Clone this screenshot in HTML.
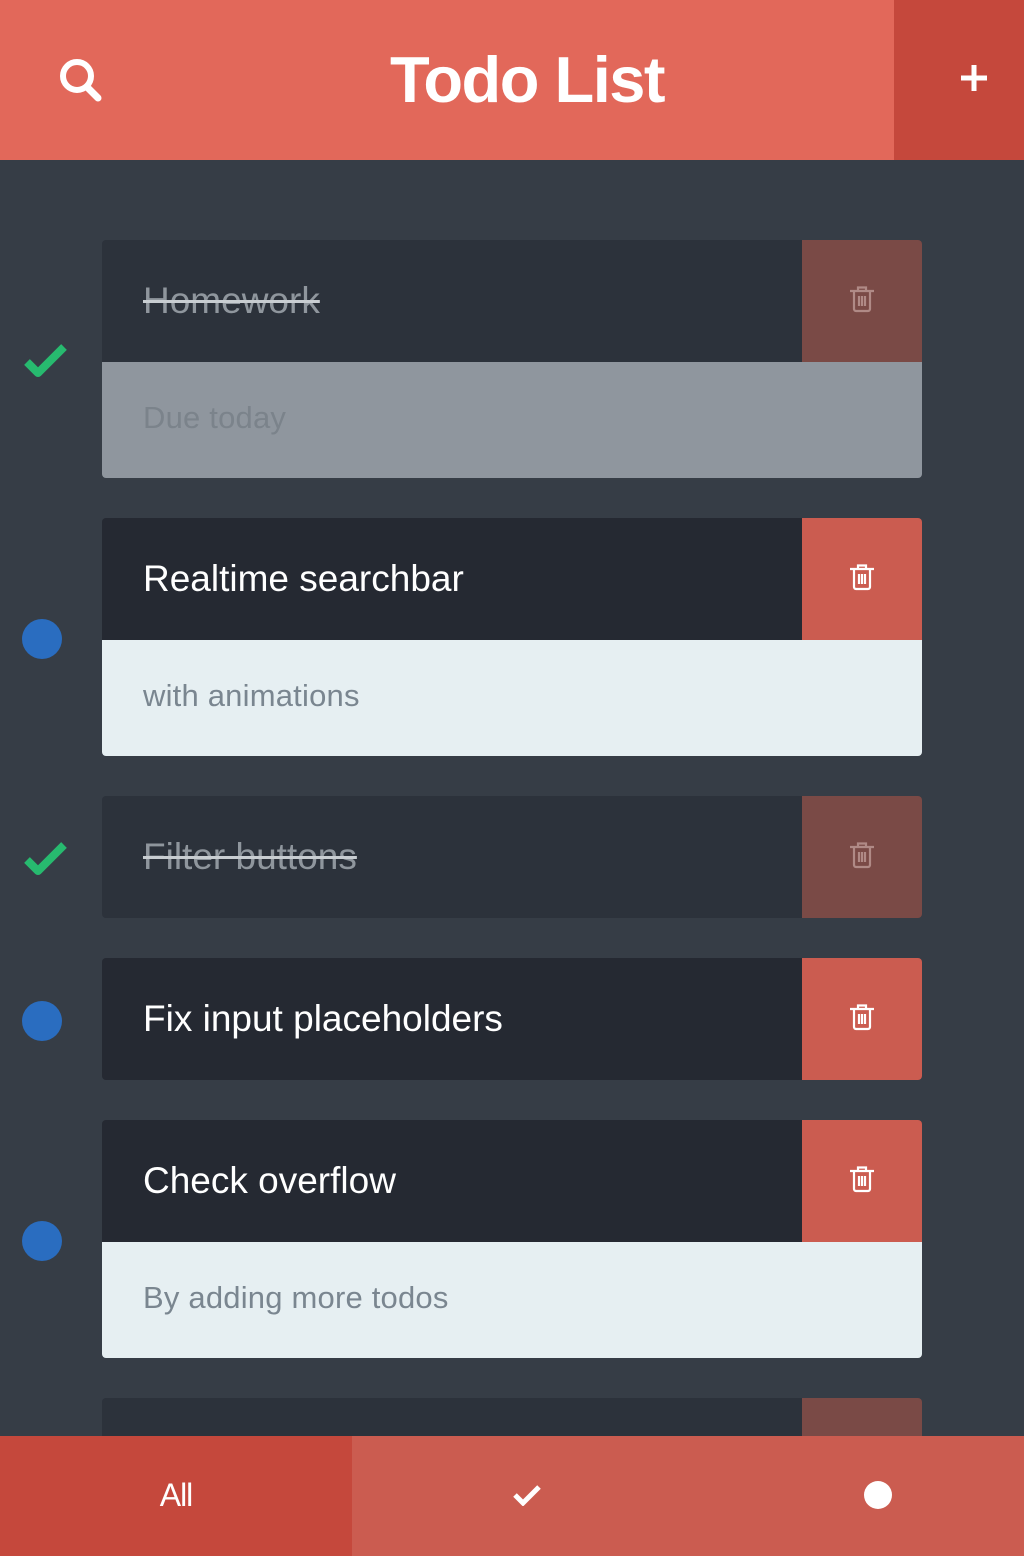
<!DOCTYPE html>
<html><head><meta charset="utf-8"><style>
*{margin:0;padding:0;box-sizing:border-box}
body{width:1024px;height:1556px;overflow:hidden;background:#363d46;font-family:"Liberation Sans",Arial,sans-serif;position:relative}
.hdr{position:absolute;left:0;top:0;width:1024px;height:160px;background:#e2685a}
.plus{position:absolute;right:0;top:0;width:130px;height:160px;background:#c5483c}
.title{position:absolute;left:0;width:1054px;top:42px;text-align:center;color:#fff;font-weight:bold;font-size:65px;letter-spacing:-1.5px}
.card{position:absolute;left:102px;width:820px;border-radius:4px;overflow:hidden}
.top{height:122px;background:#252932;position:relative}
.top .t{position:absolute;left:41px;top:40px;font-size:37px;color:#fff;letter-spacing:0}
.del{position:absolute;right:0;top:0;width:120px;height:122px;background:#cb5c50}
.del svg{position:absolute;left:46px;top:45px}
.sub{height:116px;background:#e6eff2;position:relative}
.sub .t{position:absolute;left:41px;top:38px;font-size:31px;color:#7a8690;letter-spacing:0.2px}
.done .top{background:#2c323b}
.done .top .t{color:#8f969d;text-decoration:line-through;text-decoration-color:#c8cdd1}
.done .del{background:#7a4a46}
.done .sub{background:#8f969e}
.done .sub .t{color:#7b838b}
.dot{position:absolute;left:22px;width:40px;height:40px;border-radius:50%;background:#2a6dc0}
.chk{position:absolute;left:24px}
.bar{position:absolute;left:0;top:1436px;width:1024px;height:120px;background:#cb5c50}
.all{position:absolute;left:0;top:0;width:352px;height:120px;background:#c5483c;color:#fff;font-size:32px;text-align:center;line-height:118px;letter-spacing:-1px}
</style></head><body>
<div class="hdr">
<svg style="position:absolute;left:56px;top:55px" width="48" height="48" viewBox="0 0 48 48"><circle cx="21" cy="21" r="14" fill="none" stroke="#fff" stroke-width="6"/><line x1="31" y1="32" x2="42" y2="43" stroke="#fff" stroke-width="7" stroke-linecap="round"/></svg>
<div class="title">Todo List</div>
<div class="plus"><svg style="position:absolute;left:67px;top:65px" width="26" height="26" viewBox="0 0 26 26"><rect x="10.5" y="0" width="5" height="26" fill="#fff"/><rect x="0" y="10.5" width="26" height="5" fill="#fff"/></svg></div>
</div>

<svg width="0" height="0" style="position:absolute"><defs><g id="tr"><path d="M2 6h24M10 6V2.5h8V6M6 6v18a2 2 0 0 0 2 2h12a2 2 0 0 0 2-2V6M11 11v10M14 11v10M17 11v10" fill="none" stroke="currentColor" stroke-width="2.2"/></g></defs></svg>

<svg class="chk" style="top:343px" width="44" height="36" viewBox="0 0 44 36"><path d="M3 19l11 11L40 4" fill="none" stroke="#27ba6f" stroke-width="8" stroke-linejoin="round"/></svg>
<div class="card done" style="top:240px"><div class="top"><div class="t">Homework</div><div class="del"><svg width="28" height="28" viewBox="0 0 28 28" style="color:#b08a86"><use href="#tr"/></svg></div></div><div class="sub"><div class="t">Due today</div></div></div>

<div class="dot" style="top:619px"></div>
<div class="card" style="top:518px"><div class="top"><div class="t">Realtime searchbar</div><div class="del"><svg width="28" height="28" viewBox="0 0 28 28" style="color:#fff"><use href="#tr"/></svg></div></div><div class="sub"><div class="t">with animations</div></div></div>

<svg class="chk" style="top:841px" width="44" height="36" viewBox="0 0 44 36"><path d="M3 19l11 11L40 4" fill="none" stroke="#27ba6f" stroke-width="8" stroke-linejoin="round"/></svg>
<div class="card done" style="top:796px"><div class="top"><div class="t">Filter buttons</div><div class="del"><svg width="28" height="28" viewBox="0 0 28 28" style="color:#b08a86"><use href="#tr"/></svg></div></div></div>

<div class="dot" style="top:1001px"></div>
<div class="card" style="top:958px"><div class="top"><div class="t">Fix input placeholders</div><div class="del"><svg width="28" height="28" viewBox="0 0 28 28" style="color:#fff"><use href="#tr"/></svg></div></div></div>

<div class="dot" style="top:1221px"></div>
<div class="card" style="top:1120px"><div class="top"><div class="t">Check overflow</div><div class="del"><svg width="28" height="28" viewBox="0 0 28 28" style="color:#fff"><use href="#tr"/></svg></div></div><div class="sub"><div class="t">By adding more todos</div></div></div>

<div class="card done" style="top:1398px"><div class="top"><div class="del"></div></div></div>

<div class="bar">
<div class="all">All</div>
<svg style="position:absolute;left:513px;top:48px" width="28" height="22" viewBox="0 0 28 22"><path d="M2 11l8 8L26 3" fill="none" stroke="#fff" stroke-width="5"/></svg>
<div style="position:absolute;left:864px;top:45px;width:28px;height:28px;border-radius:50%;background:#fff"></div>
</div>
</body></html>
